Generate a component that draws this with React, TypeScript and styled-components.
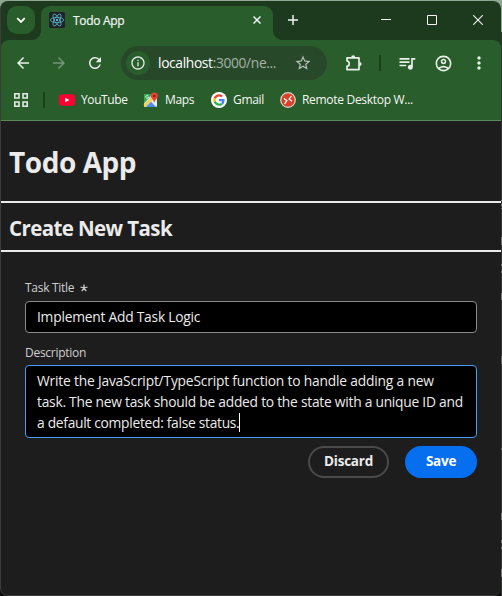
import React from "react";
import styled, { createGlobalStyle } from "styled-components";
import {
  MdArrowBack,
  MdArrowForward,
  MdRefresh,
  MdStarBorder,
  MdQueueMusic,
  MdOutlineAccountCircle,
  MdMoreVert,
  MdInfoOutline,
} from "react-icons/md";

const Global = createGlobalStyle`
  * { box-sizing: border-box; }
  html, body { margin: 0; background: #0c0c0c; overflow: hidden; }
  body { font-family: "Open Sans", "Noto Sans", sans-serif; }
  svg { display: block; flex: none; }
`;

const Desktop = styled.div`
  width: 502px;
  height: 596px;
  padding-top: 1px;
  background:
    linear-gradient(#8fa893, #8fa893) 0 0 / 502px 32px no-repeat,
    linear-gradient(
      #333 0 168px, #888 168px 169px, #333 169px 172px, #888 172px 174px, #333 174px 176px,
      #777 176px 177px, #333 177px 205px, #777 205px 213px, #333 213px 232px, #777 232px 234px,
      #333 234px 239px, #777 239px 241px, #333 241px 261px, #777 261px 268px, #333 268px 324px,
      #666 324px 332px, #333 332px 416px, #666 416px 418px, #333 418px 481px, #777 481px 488px,
      #333 488px 508px, #777 508px 511px, #333 511px 515px, #777 515px 517px, #333 517px 537px,
      #777 537px 545px, #333 545px
    ) 501px 32px / 1px 564px no-repeat,
    #0c0c0c;
`;

const Window = styled.div`
  width: 501px;
  height: 595px;
  display: flex;
  flex-direction: column;
  border-left: 1px solid #3c3c3c;
  border-bottom: 1px solid #393939;
  border-radius: 8px;
  overflow: hidden;
  background: #1d3a1f;
`;

const TabStrip = styled.div`
  height: 39px;
  display: flex;
  flex: none;
  padding: 5px 0 0 6px;
  color: #f2f5f2;
`;

const TabSearch = styled.div`
  width: 28px;
  height: 28px;
  border-radius: 10px;
  background: #295d2b;
  display: grid;
  place-items: center;
`;

const Tab = styled.div`
  position: relative;
  width: 232px;
  height: 34px;
  margin-left: 6px;
  padding: 0 12px 6px 8px;
  display: flex;
  align-items: center;
  background: #295d2b;
  border-radius: 9px 9px 0 0;
  &::before,
  &::after {
    content: "";
    position: absolute;
    bottom: 0;
    width: 9px;
    height: 9px;
  }
  &::before {
    left: -9px;
    background: radial-gradient(circle at 0 0, transparent 8.5px, #295d2b 9.2px);
  }
  &::after {
    right: -9px;
    background: radial-gradient(circle at 100% 0, transparent 8.5px, #295d2b 9.2px);
  }
`;

const TabTitle = styled.span`
  flex: 1;
  margin-left: 8px;
  padding-top: 1px;
  font-size: 12px;
  line-height: 18px;
  letter-spacing: -0.3px;
  -webkit-text-stroke: 0.2px currentColor;
`;

const NewTab = styled.div`
  width: 20px;
  height: 28px;
  margin-left: 10px;
  display: grid;
  place-items: center;
`;

const WindowControls = styled.div`
  margin-left: auto;
  height: 28px;
  display: flex;
`;

const Control = styled.div`
  width: 46px;
  display: grid;
  place-items: center;
`;

const Chrome = styled.div`
  height: 81px;
  flex: none;
  background: #295d2b;
  border-radius: 8px 8px 0 0;
  border-bottom: 1px solid #5b8b5d;
  color: #e3eae3;
`;

const Toolbar = styled.div`
  height: 46px;
  display: flex;
  align-items: center;
  padding-left: 4px;
`;

const ToolButton = styled.div<{ $dim?: boolean; $w?: number }>`
  width: ${(p) => p.$w ?? 36}px;
  display: flex;
  justify-content: center;
  color: ${(p) => (p.$dim ? "#769477" : "#e9efe9")};
`;

const AddressBar = styled.div`
  width: 206px;
  height: 34px;
  margin-left: 8px;
  padding: 0 15px 0 5px;
  display: flex;
  align-items: center;
  border-radius: 17px;
  background: #28482a;
`;

const SiteInfo = styled.div`
  width: 24px;
  height: 24px;
  border-radius: 50%;
  display: grid;
  place-items: center;
  background: #295d2b;
`;

const Url = styled.span`
  flex: 1;
  margin-left: 8px;
  white-space: nowrap;
  font-size: 13.8px;
  line-height: 20px;
  letter-spacing: -0.35px;
  color: #a4b2a5;
`;

const Host = styled.span`
  color: #fff;
`;

const Separator = styled.div<{ $left: number; $right: number }>`
  width: 2px;
  height: 16px;
  margin: 0 ${(p) => p.$right}px 0 ${(p) => p.$left}px;
  background: #1a401d;
`;

const Bookmarks = styled.div`
  height: 27px;
  display: flex;
  align-items: center;
  padding-left: 13px;
`;

const Bookmark = styled.div<{ $w: number; $spacing: number }>`
  width: ${(p) => p.$w}px;
  display: flex;
  align-items: center;
  gap: 6px;
  flex: none;
  white-space: nowrap;
  font-size: 12px;
  line-height: 18px;
  letter-spacing: ${(p) => p.$spacing}px;
  color: #f4f7f4;
`;

const Page = styled.main`
  flex: 1;
  background: #1d1d1d;
  color: #ebebeb;
`;

const AppHeader = styled.header`
  height: 82px;
  padding: 20px 8px 0;
  border-bottom: 2px solid #ebebeb;
`;

const AppTitle = styled.h1`
  margin: 0;
  font-size: 28px;
  line-height: 42px;
  font-weight: 700;
  letter-spacing: -0.45px;
`;

const SectionHeader = styled.div`
  height: 49px;
  padding: 10px 8px 0;
  border-bottom: 2px solid #ebebeb;
`;

const SectionTitle = styled.h2`
  margin: 0;
  font-size: 20.5px;
  line-height: 30px;
  font-weight: 700;
  letter-spacing: -0.6px;
`;

const Form = styled.form`
  padding: 25px 24px 0;
  display: flex;
  flex-direction: column;
`;

const Label = styled.label<{ $raise?: number }>`
  height: 24px;
  padding-bottom: ${(p) => p.$raise ?? 0}px;
  display: flex;
  align-items: center;
  gap: 6px;
  font-size: 12px;
  line-height: 18px;
  letter-spacing: -0.28px;
  color: #d0d0d0;
`;

const Field = styled.div<{ $focused?: boolean }>`
  padding: 4px 11px;
  border: 1px solid ${(p) => (p.$focused ? "#4b9cf8" : "#8a8a8a")};
  border-radius: 4px;
  background: #000;
  color: #ebebeb;
  font-size: 13.8px;
  line-height: 21px;
  white-space: nowrap;
`;

const TitleField = styled(Field)`
  height: 32px;
  margin-bottom: 8px;
  letter-spacing: -0.23px;
`;

const DescriptionField = styled(Field)`
  height: 73px;
`;

const Line = styled.div<{ $spacing: number }>`
  display: flex;
  align-items: center;
  height: 21px;
  letter-spacing: ${(p) => p.$spacing}px;
`;

const Caret = styled.span`
  width: 1px;
  height: 19px;
  background: #fff;
`;

const Actions = styled.div`
  margin-top: 8px;
  display: flex;
  justify-content: flex-end;
  gap: 16px;
`;

const Button = styled.button<{ $primary?: boolean }>`
  width: ${(p) => (p.$primary ? 72 : 81)}px;
  height: 32px;
  padding: 0 0 2px;
  border: 2px solid ${(p) => (p.$primary ? "#056ff0" : "#4a4a4a")};
  border-radius: 16px;
  background: ${(p) => (p.$primary ? "#056ff0" : "transparent")};
  color: ${(p) => (p.$primary ? "#fff" : "#ebebeb")};
  font: 700 13.5px/20px "Open Sans", sans-serif;
  letter-spacing: -0.25px;
`;

const ReactLogo = () => (
  <svg width="16" height="16" viewBox="0 0 16 16">
    <rect width="16" height="16" rx="1.5" fill="#222326" />
    <g fill="none" stroke="#57b4cf" strokeWidth="0.8">
      <ellipse cx="8" cy="8" rx="6.6" ry="2.6" />
      <ellipse cx="8" cy="8" rx="6.6" ry="2.6" transform="rotate(60 8 8)" />
      <ellipse cx="8" cy="8" rx="6.6" ry="2.6" transform="rotate(120 8 8)" />
    </g>
    <circle cx="8" cy="8" r="1.2" fill="#57b4cf" />
  </svg>
);

const PuzzleIcon = () => (
  <svg width="18" height="18" viewBox="0 0 18 18" fill="none" stroke="currentColor" strokeWidth="1.7" strokeLinejoin="round">
    <path d="M2 3.9H14V15.6H2V12.2C5 12 5 7.3 2 7Z" />
    <path d="M6.2 3.3a2 2 0 0 1 4 0ZM14.6 7.9a2 2 0 0 1 0 4Z" fill="currentColor" stroke="none" />
  </svg>
);

const AppsIcon = () => (
  <svg width="14" height="14" viewBox="0 0 14 14" fill="none" stroke="#e3eae3" strokeWidth="1.6">
    <path d="M.8.8h4.2v4.2H.8zM9 .8h4.2v4.2H9zM.8 9h4.2v4.2H.8zM9 9h4.2v4.2H9z" />
  </svg>
);

const YouTubeIcon = () => (
  <svg width="16" height="16" viewBox="0 0 16 16">
    <rect y="2.3" width="16" height="11.4" rx="2.8" fill="#ff0033" />
    <path d="M6.2 5.7v4.6L10.4 8z" fill="#fff" />
  </svg>
);

const MapsIcon = () => (
  <svg width="16" height="16" viewBox="0 0 16 16">
    <rect x="1" y="2" width="13" height="13" rx="1" fill="#dfe3e6" />
    <path d="M1 3a1 1 0 0 1 1-1h7.5L1 11.5z" fill="#35a853" />
    <path d="M1 12.5 9.5 4l2 2L2.5 15H2a1 1 0 0 1-1-1z" fill="#fbd249" />
    <path d="M3 15l5-5.2L13 15z" fill="#4c8df6" />
    <path d="M8.6 8.6l1-1L14 12v2z" fill="#f4f4f4" />
    <path d="M5.8 5.1H4.3M5.3 3.8a1.5 1.5 0 1 0 .4 1.4" stroke="#fff" strokeWidth=".7" fill="none" />
    <path d="M11.3.4A3.6 3.6 0 0 0 7.7 4c0 2.5 3 3.4 3.6 7 .6-3.6 3.6-4.5 3.6-7A3.6 3.6 0 0 0 11.3.4z" fill="#e44335" />
    <circle cx="11.3" cy="4" r="1.3" fill="#8e1d18" />
  </svg>
);

const GoogleIcon = () => (
  <svg width="16" height="16" viewBox="0 0 16 16">
    <circle cx="8" cy="8" r="8" fill="#fff" />
    <g transform="translate(2.2 2.2) scale(.242)">
      <path fill="#EA4335" d="M24 9.5c3.54 0 6.71 1.22 9.21 3.6l6.85-6.85C35.9 2.38 30.47 0 24 0 14.62 0 6.51 5.38 2.56 13.22l7.98 6.19C12.43 13.72 17.74 9.5 24 9.5z" />
      <path fill="#4285F4" d="M46.98 24.55c0-1.57-.15-3.09-.38-4.55H24v9.02h12.94c-.58 2.96-2.26 5.48-4.78 7.18l7.73 6c4.51-4.18 7.09-10.36 7.09-17.65z" />
      <path fill="#FBBC05" d="M10.53 28.59c-.48-1.45-.76-2.99-.76-4.59s.27-3.14.76-4.59l-7.98-6.19C.92 16.46 0 20.12 0 24c0 3.88.92 7.54 2.56 10.78l7.97-6.19z" />
      <path fill="#34A853" d="M24 48c6.48 0 11.93-2.13 15.89-5.81l-7.73-6c-2.15 1.45-4.92 2.3-8.16 2.3-6.26 0-11.57-4.22-13.47-9.91l-7.98 6.19C6.51 42.62 14.62 48 24 48z" />
    </g>
  </svg>
);

const RemoteIcon = () => (
  <svg width="16" height="16" viewBox="0 0 16 16">
    <circle cx="8" cy="8" r="7.3" fill="#d9432a" stroke="#d8d5d0" strokeWidth="1.2" />
    <path d="M4 6.6 6.9 8.7 4.6 11.9M11.4 4.1 9.1 7.1 12 9.2" fill="none" stroke="#fff" strokeWidth="1.2" />
  </svg>
);

const RequiredMark = () => (
  <svg width="8" height="8" viewBox="0 0 8 8" stroke="#d0d0d0" strokeWidth="1.3">
    <path d="M4 4V.4M4 4 .5 3M4 4l3.5-1M4 4 1.8 7.2M4 4l2.2 3.2" />
  </svg>
);

export default function App() {
  return (
    <>
      <Global />
      <Desktop>
        <Window>
          <TabStrip>
            <TabSearch>
              <svg width="10" height="10" viewBox="0 0 10 10" fill="none" stroke="#fff" strokeWidth="1.8">
                <path d="M1.2 3.2 5 7l3.8-3.8" />
              </svg>
            </TabSearch>
            <Tab>
              <ReactLogo />
              <TabTitle>Todo App</TabTitle>
              <svg width="8" height="8" viewBox="0 0 8 8" stroke="currentColor" strokeWidth="1.5">
                <path d="M.5.5l7 7M7.5.5l-7 7" />
              </svg>
            </Tab>
            <NewTab>
              <svg width="10" height="10" viewBox="0 0 10 10" stroke="currentColor" strokeWidth="1.5">
                <path d="M5 0v10M0 5h10" />
              </svg>
            </NewTab>
            <WindowControls>
              <Control>
                <svg width="10" height="10" viewBox="0 0 10 10" stroke="currentColor">
                  <path d="M0 4.5h10" />
                </svg>
              </Control>
              <Control>
                <svg width="10" height="10" viewBox="0 0 10 10" fill="none" stroke="currentColor">
                  <path d="M.5.5h9v9h-9z" />
                </svg>
              </Control>
              <Control>
                <svg width="10" height="10" viewBox="0 0 10 10" stroke="currentColor" strokeWidth="1.1">
                  <path d="M.2.2l9.6 9.6M9.8.2.2 9.8" />
                </svg>
              </Control>
            </WindowControls>
          </TabStrip>

          <Chrome>
            <Toolbar>
              <ToolButton><MdArrowBack size={18} /></ToolButton>
              <ToolButton $dim><MdArrowForward size={18} /></ToolButton>
              <ToolButton><MdRefresh size={18} /></ToolButton>
              <AddressBar>
                <SiteInfo><MdInfoOutline size={16} color="#e3eae3" /></SiteInfo>
                <Url><Host>localhost</Host>:3000/ne...</Url>
                <MdStarBorder size={18} color="#b5c0b5" />
              </AddressBar>
              <ToolButton $w={54}><PuzzleIcon /></ToolButton>
              <Separator $left={-2} $right={8} />
              <ToolButton><MdQueueMusic size={20} /></ToolButton>
              <ToolButton><MdOutlineAccountCircle size={19} /></ToolButton>
              <ToolButton><MdMoreVert size={20} /></ToolButton>
            </Toolbar>
            <Bookmarks>
              <AppsIcon />
              <Separator $left={15} $right={14} />
              <Bookmark $w={84} $spacing={-0.4}><YouTubeIcon />YouTube</Bookmark>
              <Bookmark $w={68} $spacing={-0.35}><MapsIcon />Maps</Bookmark>
              <Bookmark $w={69} $spacing={-0.3}><GoogleIcon />Gmail</Bookmark>
              <Bookmark $w={140} $spacing={-0.3}><RemoteIcon />Remote Desktop W...</Bookmark>
            </Bookmarks>
          </Chrome>

          <Page>
            <AppHeader>
              <AppTitle>Todo App</AppTitle>
            </AppHeader>
            <SectionHeader>
              <SectionTitle>Create New Task</SectionTitle>
            </SectionHeader>
            <Form>
              <Label $raise={2}>Task Title <RequiredMark /></Label>
              <TitleField>Implement Add Task Logic</TitleField>
              <Label>Description</Label>
              <DescriptionField $focused>
                <Line $spacing={-0.19}>Write the JavaScript/TypeScript function to handle adding a new</Line>
                <Line $spacing={-0.25}>task. The new task should be added to the state with a unique ID and</Line>
                <Line $spacing={-0.29}>a default completed: false status.<Caret /></Line>
              </DescriptionField>
              <Actions>
                <Button type="button">Discard</Button>
                <Button type="button" $primary>Save</Button>
              </Actions>
            </Form>
          </Page>
        </Window>
      </Desktop>
    </>
  );
}
